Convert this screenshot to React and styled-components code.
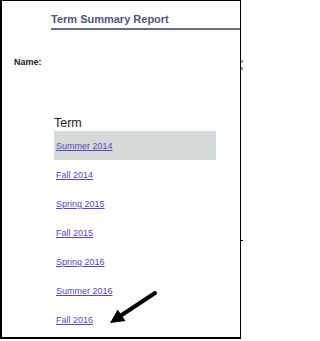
import React from 'react';
import styled, { createGlobalStyle } from 'styled-components';

const GlobalStyle = createGlobalStyle`
    html, body {
        margin: 0;
        padding: 0;
        background: #ffffff;
        font-family: "Liberation Sans", Arial, sans-serif;
    }
`;

const Frame = styled.div`
    position: relative;
    width: 243px;
    height: 341px;
    display: flex;
    align-items: flex-start;
    overflow: hidden;
`;

const Panel = styled.div`
    box-sizing: border-box;
    width: 241px;
    height: 339px;
    border-left: 2px solid #000;
    border-top: 1px solid #000;
    border-right: 1px solid #000;
    border-bottom: 2px solid #000;
    display: flex;
    flex-direction: column;
`;

const Edge = styled.div`
    width: 2px;
    height: 341px;
    display: flex;
    flex-direction: column;
`;

const EdgeMark = styled.div`
    height: ${p => p.h}px;
    margin-top: ${p => p.top}px;
    background: ${p => p.color};
`;

const Title = styled.div`
    margin-left: 49px;
    padding-top: 12px;
    padding-bottom: 2px;
    font-size: 11px;
    line-height: 13px;
    font-weight: bold;
    color: #4a5682;
    border-bottom: 2px solid #676d8c;
`;

const NameRow = styled.div`
    margin-top: 27px;
    padding-left: 12px;
    font-size: 9px;
    line-height: 11px;
    font-weight: bold;
    color: #1a1a1a;
`;

const TermTable = styled.div`
    margin-top: 48px;
    margin-left: 52px;
    width: 162px;
    display: flex;
    flex-direction: column;
`;

const TermHead = styled.div`
    font-size: 12.5px;
    line-height: 14px;
    color: #222;
    margin-bottom: 1px;
`;

const Row = styled.div`
    height: 29px;
    display: flex;
    align-items: center;
    padding-left: 2px;
    background: ${p => (p.active ? '#d4dad7' : 'transparent')};
`;

const TermLink = styled.a`
    font-size: 9px;
    color: #5546c2;
    text-decoration: underline;
    cursor: pointer;
`;

const ArrowSvg = styled.svg`
    position: absolute;
    left: 0;
    top: 0;
    pointer-events: none;
`;

const terms = ['Summer 2014', 'Fall 2014', 'Spring 2015', 'Fall 2015', 'Spring 2016', 'Summer 2016', 'Fall 2016'];

const App = () => {
    return (
        <>
            <GlobalStyle />
            <Frame>
                <Panel>
                    <Title>Term Summary Report</Title>
                    <NameRow>Name:</NameRow>
                    <TermTable>
                        <TermHead>Term</TermHead>
                        {terms.map((t, i) => (
                            <Row key={t} active={i === 0}>
                                <TermLink>{t}</TermLink>
                            </Row>
                        ))}
                    </TermTable>
                </Panel>
                <Edge>
                    <EdgeMark top={60} h={3} color="#9aa39a" />
                    <EdgeMark top={4} h={3} color="#9aa39a" />
                    <EdgeMark top={170} h={1} color="#000" />
                </Edge>
                {/* annotation arrow */}
                <ArrowSvg width="243" height="341" viewBox="0 0 243 341">
                    <line x1="155" y1="293" x2="121" y2="315.5" stroke="#000" strokeWidth="4" strokeLinecap="round" />
                    <polygon points="110,323 125.5,321 117.7,309.4" fill="#000" />
                </ArrowSvg>
            </Frame>
        </>
    );
};

export default App;
